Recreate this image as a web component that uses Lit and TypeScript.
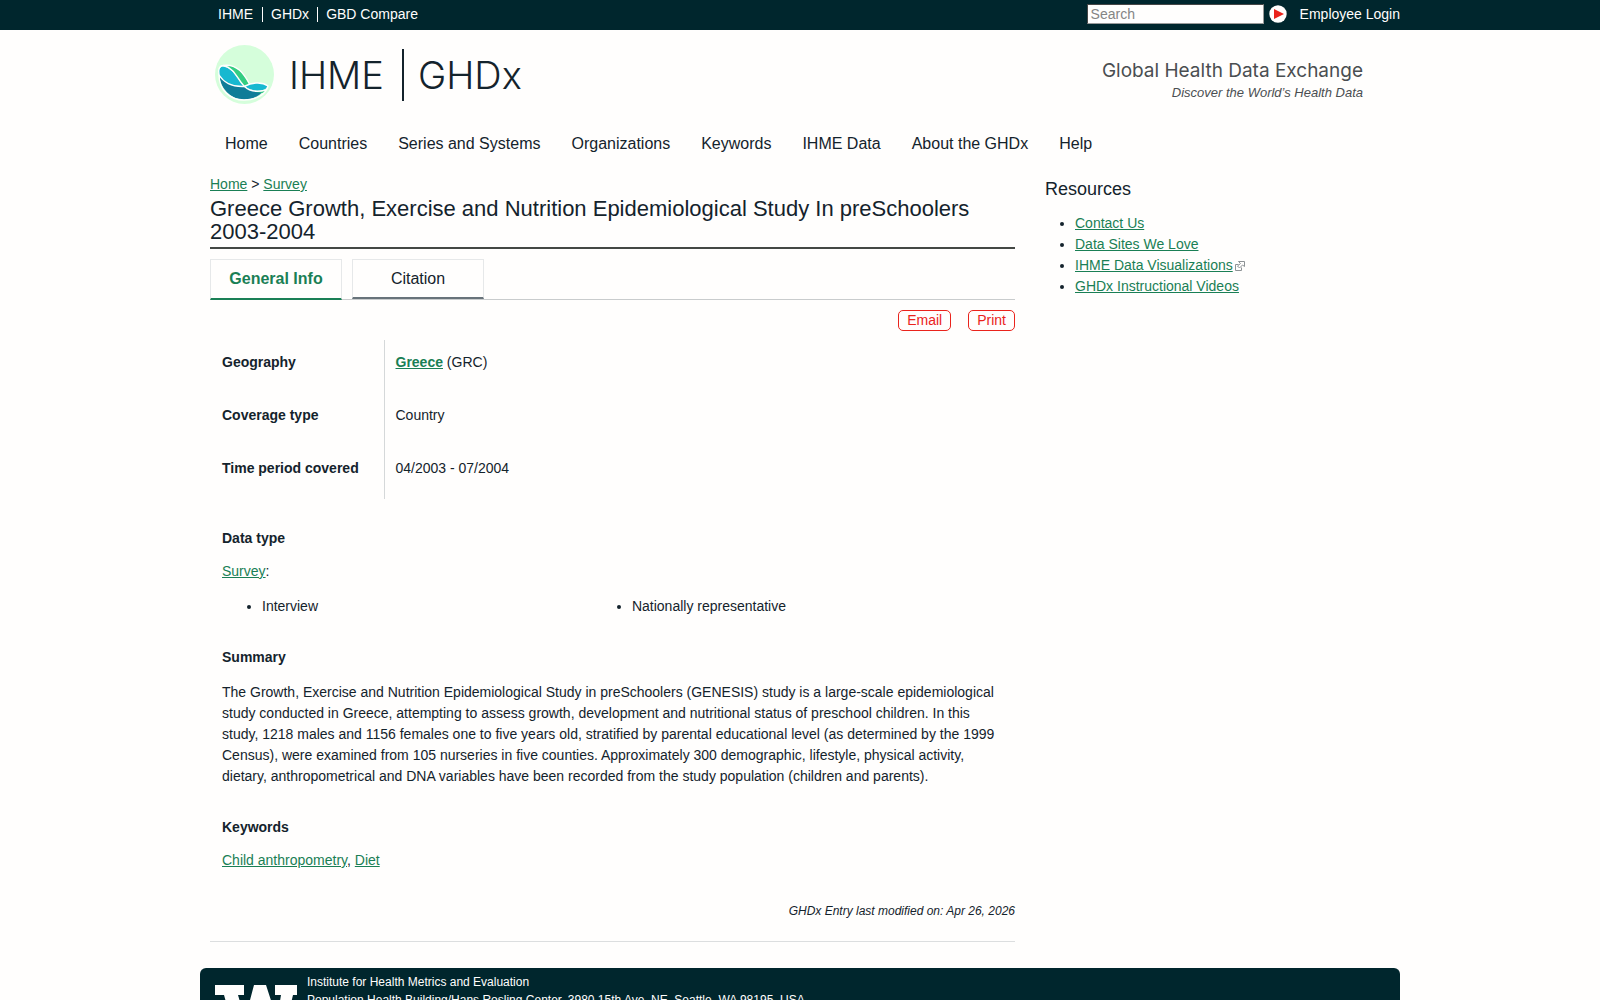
import { LitElement, html, css, svg } from "lit";
import { customElement } from "lit/decorators.js";

const topLinks = ["IHME", "GHDx", "GBD Compare"];
const navLinks = [
  "Home",
  "Countries",
  "Series and Systems",
  "Organizations",
  "Keywords",
  "IHME Data",
  "About the GHDx",
  "Help",
];

const waveLogo = svg`
  <circle cx="29.5" cy="29.5" r="29.5" fill="#d5fedb" />
  <path d="M4 30C6 44 15 54 29 54.500C37 54.500 44 51 48 46.500C40 47 34 44 29 42C19 41 10 38 4 30Z" fill="#107c98" />
  <path d="M4 30C3 26 4 22 8 21.500C18 22 23 36 29 41C17 42 9 37 4 30Z" fill="#17b8d0" />
  <path d="M8 20.500C22 18 30 31 34.500 39L29 41.500C23 35 18 22 8 20.500Z" fill="#34cd82" />
  <path d="M29 41.500C37 38 46 36 52.500 41C51 47 38 47 29 41.500Z" fill="#17b8d0" />
  <path d="M40 47C45 47 49 46 51.500 44.500L48.500 48Z" fill="#34cd82" />
  <g fill="none" stroke="#fffefd" stroke-width="1.400">
    <path d="M4 30C3 25 4 21 8 20.500C23 18 30 31 34.500 39" />
    <path d="M8 20.500C20 23 22 34 29 41C35 47 44 47 51 45" />
    <path d="M4 30C9 38 17 42 29 41.500C36 38 46 36 53 41C51 49 42 55 29 55C15 55 4 45 4 30Z" />
  </g>
`;

@customElement("app-root")
export class AppRoot extends LitElement {
  static styles = css`
    :host {
      display: block;
      background: #fffefd;
      color: #14232c;
      font: 14px/21px "Liberation Sans", Arial, sans-serif;
    }
    * {
      box-sizing: border-box;
    }
    h1, h2, p, ul {
      margin: 0;
      font-weight: 400;
    }
    a {
      color: #1a7f55;
    }
    .topbar {
      background: #00262d;
    }
    .wrap {
      max-width: 1200px;
      margin: 0 auto;
    }
    .topbar-row {
      display: flex;
      align-items: center;
      justify-content: space-between;
      height: 30px;
      padding: 0 0 2px 8px;
    }
    .topbar a {
      color: #fffefd;
      text-decoration: none;
    }
    .top-links {
      display: flex;
      line-height: 15px;
    }
    .top-links a {
      padding: 0 9px 0 10px;
    }
    .top-links a + a {
      border-left: 1px solid #fffefd;
      padding: 0 8px;
    }
    .search {
      display: flex;
      align-items: center;
    }
    .search-box {
      width: 177px;
      height: 20px;
      margin-right: 5px;
      padding: 0 3px;
      border: 1px inset #9a9a9a;
      background: #fffefd;
      font: inherit;
      line-height: 17px;
    }
    .search-box::placeholder {
      color: #858585;
    }
    .go {
      display: flex;
      width: 18px;
      height: 18px;
      margin-right: 13px;
      padding: 0;
      border: 0;
      background: none;
    }
    .banner {
      display: flex;
      justify-content: space-between;
      padding: 15px 37px 0 15px;
    }
    .brand {
      display: flex;
      align-items: center;
      height: 59px;
      color: #14232c;
      text-decoration: none;
      font: 300 38px/44px Inter, "Liberation Sans", sans-serif;
    }
    .brand-mark {
      width: 59px;
      height: 59px;
      margin-right: 15px;
    }
    .brand-rule {
      width: 2px;
      height: 52px;
      margin: 0 14px 0 18px;
      background: #14232c;
    }
    .tagline {
      padding-top: 13px;
      text-align: right;
      color: #4a4e51;
    }
    .tagline-title {
      font: 400 19px/26px Inter, "Liberation Sans", sans-serif;
    }
    .tagline-sub {
      font-size: 13px;
      line-height: 18px;
      font-style: italic;
    }
    .nav {
      display: flex;
      gap: 31px;
      padding: 28px 25px 0;
      font-size: 16px;
      line-height: 24px;
    }
    .nav a {
      color: inherit;
      text-decoration: none;
    }
    .columns {
      display: grid;
      grid-template-columns: 7fr 3fr;
      gap: 30px;
      padding: 18px 10px 0;
    }
    .title {
      padding: 2px 0 4px;
      border-bottom: 2px solid #444844;
      font-size: 22px;
      line-height: 23px;
    }
    .tabs {
      display: flex;
      align-items: flex-start;
      gap: 10px;
      margin-top: 10px;
      border-bottom: 1px solid #c9cccd;
    }
    .tab {
      width: 132px;
      height: 40px;
      padding: 0;
      border: 1px solid #e6e8e9;
      border-bottom: 2px solid #68737a;
      background: #fffefd;
      color: inherit;
      font: 16px/24px "Liberation Sans", Arial, sans-serif;
    }
    .tab-active {
      height: 41px;
      margin-bottom: -1px;
      border-bottom-color: #1a7f55;
      color: #1a7f55;
      font-weight: 700;
    }
    .actions {
      display: flex;
      justify-content: flex-end;
      gap: 17px;
      margin-top: 10px;
    }
    .action {
      height: 21px;
      padding: 0 8px;
      border: 1px solid #ea231c;
      border-radius: 5px;
      background: none;
      color: #ea231c;
      font: inherit;
      line-height: 19px;
    }
    .facts {
      width: 100%;
      margin-top: 9px;
      border-collapse: collapse;
    }
    .facts th,
    .facts td {
      height: 53px;
      padding: 12px 11px 20px;
      text-align: left;
      vertical-align: top;
    }
    .facts th {
      width: 174px;
      padding-left: 12px;
      border-right: 1px solid #d5d8d9;
    }
    .field {
      padding: 0 12px;
    }
    .label {
      margin-bottom: 14px;
      font-size: 14px;
      font-weight: 700;
    }
    .label-tight {
      margin-bottom: 12px;
    }
    .data-type {
      padding-top: 29px;
    }
    .types {
      display: grid;
      grid-template-columns: 9fr 10fr;
      margin: 14px 0 0;
      padding: 0;
    }
    .types li {
      margin-left: 40px;
    }
    .spaced {
      padding-top: 30px;
    }
    .modified {
      margin-top: 30px;
      padding-bottom: 19px;
      border-bottom: 1px solid #dcdedf;
      text-align: right;
      font-size: 12px;
      font-style: italic;
    }
    .side-title {
      padding-top: 2px;
      font-size: 18px;
      line-height: 27px;
    }
    .side-list {
      margin-top: 10px;
      padding-left: 30px;
    }
    .ext {
      width: 10px;
      height: 10px;
      margin-left: 2px;
      vertical-align: -1px;
    }
    .footer {
      display: flex;
      gap: 10px;
      margin-top: 26px;
      padding: 5px 15px 0;
      border-radius: 6px 6px 0 0;
      background: #00262d;
      color: #fffefd;
      font-size: 12px;
      line-height: 18px;
    }
    .uw {
      width: 82px;
      height: 56px;
      margin-top: 12px;
    }
  `;

  render() {
    return html`
      <header>
        <div class="topbar">
          <div class="wrap topbar-row">
            <nav class="top-links" aria-label="Sites">
              ${topLinks.map((t) => html`<a href="#">${t}</a>`)}
            </nav>
            <form class="search" role="search">
              <input class="search-box" type="text" aria-label="Search" placeholder="Search" />
              <button class="go" type="button" aria-label="Submit search">
                <svg width="18" height="18" viewBox="0 0 18 18">
                  <circle cx="9" cy="9" r="8.700" fill="#fffefd" />
                  <path d="M5 4L15 9L5 14Z" fill="#ea231c" />
                </svg>
              </button>
              <a href="#">Employee Login</a>
            </form>
          </div>
        </div>
        <div class="wrap">
          <div class="banner">
            <a class="brand" href="#">
              <svg class="brand-mark" viewBox="0 0 59 59" aria-hidden="true">${waveLogo}</svg>
              <span>IHME</span><span class="brand-rule"></span><span>GHDx</span>
            </a>
            <div class="tagline">
              <p class="tagline-title">Global Health Data Exchange</p>
              <p class="tagline-sub">Discover the World’s Health Data</p>
            </div>
          </div>
          <nav class="nav" aria-label="Main">
            ${navLinks.map((t) => html`<a href="#">${t}</a>`)}
          </nav>
        </div>
      </header>

      <div class="wrap columns">
        <main>
          <nav aria-label="Breadcrumb"><a href="#">Home</a> &gt; <a href="#">Survey</a></nav>
          <h1 class="title">
            Greece Growth, Exercise and Nutrition Epidemiological Study In preSchoolers 2003-2004
          </h1>
          <div class="tabs" role="tablist">
            <button class="tab tab-active" role="tab" aria-selected="true">General Info</button>
            <button class="tab" role="tab" aria-selected="false">Citation</button>
          </div>
          <div class="actions">
            <button class="action">Email</button>
            <button class="action">Print</button>
          </div>
          <table class="facts">
            <tr>
              <th scope="row">Geography</th>
              <td><a href="#"><b>Greece</b></a> (GRC)</td>
            </tr>
            <tr>
              <th scope="row">Coverage type</th>
              <td>Country</td>
            </tr>
            <tr>
              <th scope="row">Time period covered</th>
              <td>04/2003 - 07/2004</td>
            </tr>
          </table>
          <section class="field data-type">
            <h2 class="label label-tight">Data type</h2>
            <p><a href="#">Survey</a>:</p>
            <ul class="types">
              <li>Interview</li>
              <li>Nationally representative</li>
            </ul>
          </section>
          <section class="field spaced">
            <h2 class="label">Summary</h2>
            <p>
              The Growth, Exercise and Nutrition Epidemiological Study in preSchoolers (GENESIS) study
              is a large-scale epidemiological study conducted in Greece, attempting to assess growth,
              development and nutritional status of preschool children. In this study, 1218 males and
              1156 females one to five years old, stratified by parental educational level (as
              determined by the 1999 Census), were examined from 105 nurseries in five counties.
              Approximately 300 demographic, lifestyle, physical activity, dietary, anthropometrical
              and DNA variables have been recorded from the study population (children and parents).
            </p>
          </section>
          <section class="field spaced">
            <h2 class="label label-tight">Keywords</h2>
            <p><a href="#">Child anthropometry</a>, <a href="#">Diet</a></p>
          </section>
          <p class="modified">GHDx Entry last modified on: Apr 26, 2026</p>
        </main>
        <aside>
          <h2 class="side-title">Resources</h2>
          <ul class="side-list">
            <li><a href="#">Contact Us</a></li>
            <li><a href="#">Data Sites We Love</a></li>
            <li><a href="#">IHME Data Visualizations</a><svg class="ext" viewBox="0 0 10 10" fill="none" stroke="#8d9295" aria-hidden="true"><path d="M3.500 3.500H.5V9.500H6.500V6.500M3.500.5H9.500V5.500L7.500 4L4.500 7L2.500 5L5.500 2.500Z" /></svg></li>
            <li><a href="#">GHDx Instructional Videos</a></li>
          </ul>
        </aside>
      </div>

      <footer class="wrap footer">
        <svg class="uw" viewBox="0 0 82 56" aria-label="University of Washington" fill="#fffefd">
          <path d="M0 0H29V10H23L30 34L39 0H51L62 34L66 10H60V0H82V10H78L67 56H55L45 24L35 56H22L9 10H0Z" />
        </svg>
        <div>
          <p>Institute for Health Metrics and Evaluation</p>
          <p>Population Health Building/Hans Rosling Center, 3980 15th Ave. NE, Seattle, WA 98195, USA</p>
        </div>
      </footer>
    `;
  }
}
